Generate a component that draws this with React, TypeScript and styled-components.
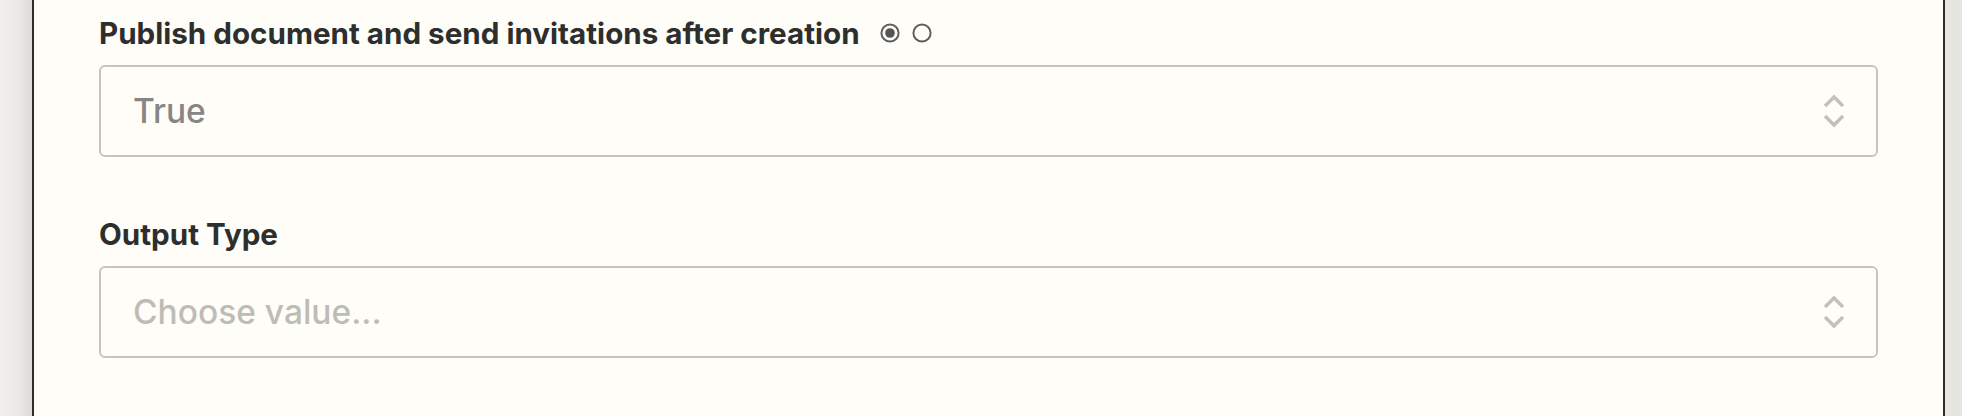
import styled, { createGlobalStyle } from "styled-components";

const GlobalStyle = createGlobalStyle`
  html, body {
    margin: 0;
    padding: 0;
    background: #ffffff;
  }
  body {
    font-family: Inter, "Noto Sans", "Liberation Sans", sans-serif;
    -webkit-font-smoothing: antialiased;
  }
`;

const Page = styled.div`
  display: flex;
  width: 1980px;
  height: 416px;
  overflow: hidden;
  background: #ffffff;
`;

const LeftGutter = styled.div`
  width: 32px;
  flex-shrink: 0;
  background: linear-gradient(to right, #f1f0ec 0%, #eae9e5 60%, #dcdbd7 100%);
`;

const RightGutter = styled.div`
  width: 17px;
  flex-shrink: 0;
  margin-right: 18px;
  background: #e6e5e2;
`;

const Panel = styled.div`
  flex: 1;
  display: flex;
  flex-direction: column;
  background: #fffdf8;
  border-left: 2px solid #2b2b2b;
  border-right: 2px solid #2b2b2b;
  padding: 13px 65px 0;
`;

const Field = styled.div<{ $spaced?: boolean }>`
  display: flex;
  flex-direction: column;
  margin-top: ${(p) => (p.$spaced ? "57px" : "0")};
`;

const LabelRow = styled.div`
  display: flex;
  align-items: center;
  height: 40px;
  margin-bottom: 12px;
`;

const Label = styled.span`
  font-size: 29.6px;
  line-height: 40px;
  font-weight: 700;
  color: #2d2e2e;
`;

const Toggles = styled.div`
  display: flex;
  align-items: center;
  gap: 12px;
  margin-left: 20px;
`;

const Select = styled.div`
  display: flex;
  align-items: center;
  justify-content: space-between;
  height: 92px;
  box-sizing: border-box;
  border: 2px solid #c6c4be;
  border-radius: 6px;
  background: #fffdf8;
  padding: 0 31px 0 32px;
`;

const Value = styled.span<{ $placeholder?: boolean }>`
  font-size: 33.5px;
  font-weight: 500;
  color: ${(p) => (p.$placeholder ? "#bebcb7" : "#878684")};
`;

const Radio = ({ checked }: { checked?: boolean }) => (
  <svg width="20" height="20" viewBox="0 0 20 20">
    <circle cx="10" cy="10" r="8.6" fill="none" stroke="#5f5f5f" strokeWidth="2" />
    {checked && <circle cx="10" cy="10" r="4.8" fill="#555555" />}
  </svg>
);

const UpDown = () => (
  <svg width="22" height="36" viewBox="0 0 22 36">
    <path
      d="M2 13 L11 4 L20 13 M2 23 L11 32 L20 23"
      fill="none"
      stroke="#c2c0ba"
      strokeWidth="3.5"
      strokeLinecap="butt"
      strokeLinejoin="miter"
    />
  </svg>
);

export default function App() {
  return (
    <>
      <GlobalStyle />
      <Page>
        <LeftGutter />
        <Panel>
          <Field>
            <LabelRow>
              <Label>Publish document and send invitations after creation</Label>
              <Toggles>
                <Radio checked />
                <Radio />
              </Toggles>
            </LabelRow>
            <Select>
              <Value>True</Value>
              <UpDown />
            </Select>
          </Field>
          <Field $spaced>
            <LabelRow>
              <Label>Output Type</Label>
            </LabelRow>
            <Select>
              <Value $placeholder>Choose value...</Value>
              <UpDown />
            </Select>
          </Field>
        </Panel>
        <RightGutter />
      </Page>
    </>
  );
}
